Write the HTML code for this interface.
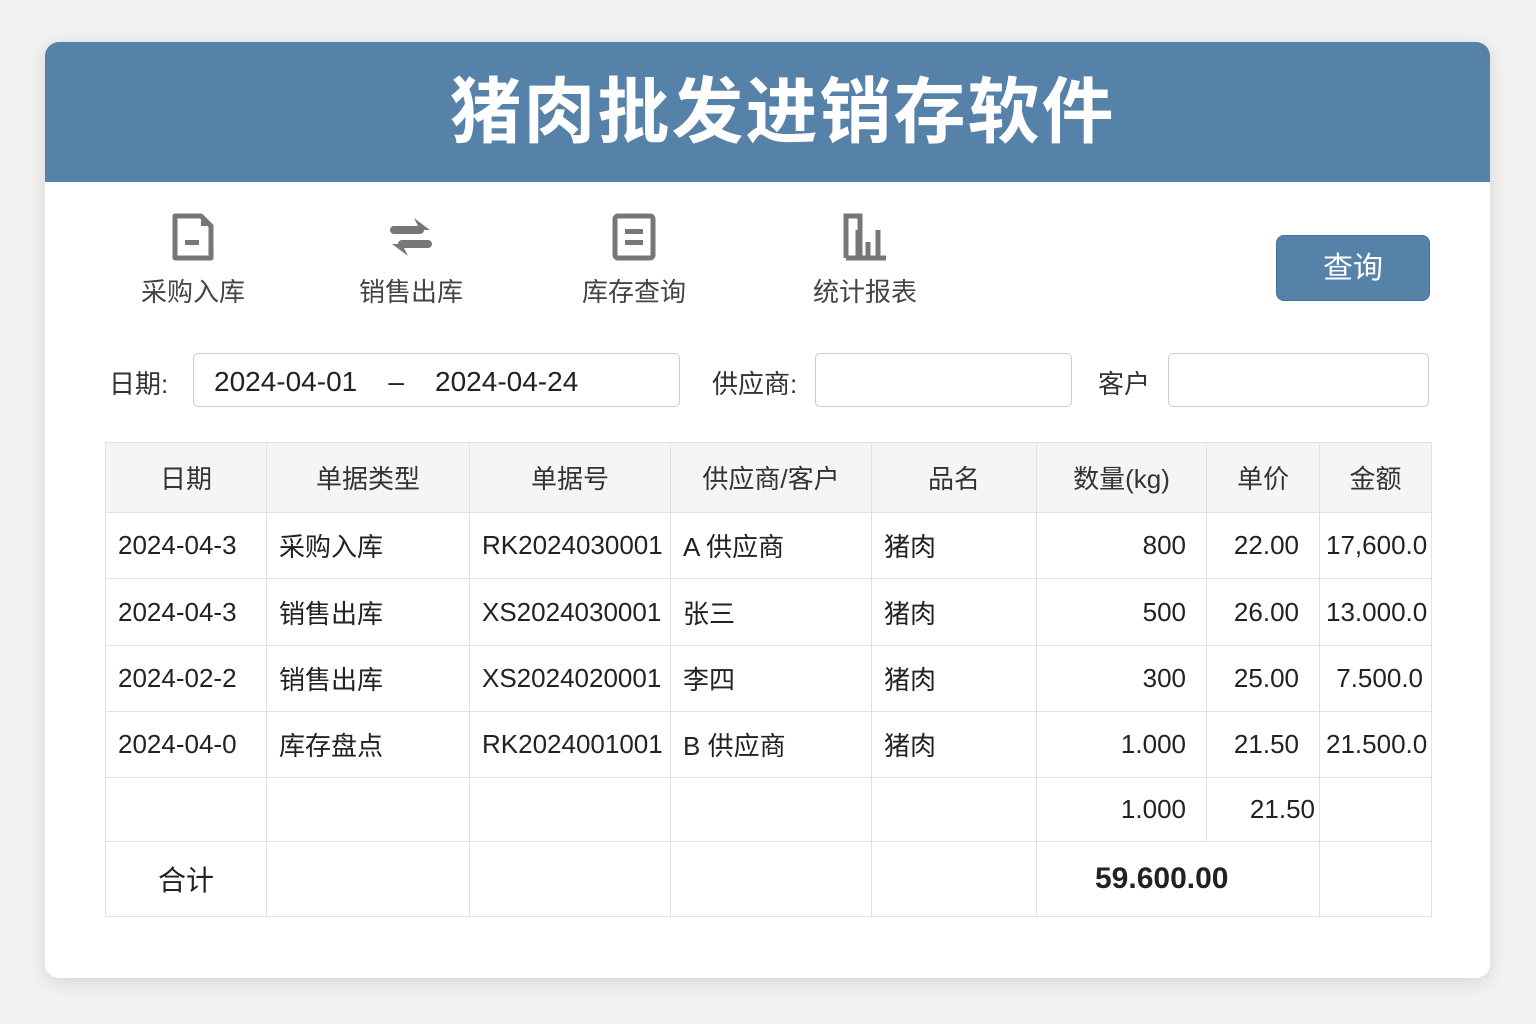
<!DOCTYPE html>
<html><head><meta charset="utf-8"><style>
body{margin:0;width:1536px;height:1024px;background:#f2f2f0;font-family:"Liberation Sans","Noto Sans CJK SC",sans-serif;position:relative;overflow:hidden}
.card{position:absolute;left:45px;top:42px;width:1445px;height:936px;background:#fff;border-radius:14px;box-shadow:0 4px 18px rgba(0,0,0,.12);overflow:hidden}
.hd{height:140px;background:#5681a8;color:#fff;font-size:72px;font-weight:bold;text-align:center;line-height:142px;letter-spacing:2px;padding-left:30px}
.ab{position:absolute;text-align:center;color:#444;font-size:26px;width:160px}
.ab svg{display:block;margin:0 auto 10px}
.btn{position:absolute;left:1231px;top:193px;width:154px;height:66px;background:#5681a8;border-radius:8px;color:#fff;font-size:30px;text-align:center;line-height:66px;border:1px solid #46709a;box-sizing:border-box}
.lbl{position:absolute;font-size:26px;color:#333}
.inp{position:absolute;border:1.5px solid #ccc;border-radius:5px;height:54px;box-sizing:border-box;font-size:28px;color:#222;line-height:56px}
table{position:absolute;left:60px;top:400px;border-collapse:collapse;font-size:26px;color:#222;table-layout:fixed;width:1326px}
td{border:1px solid #e2e2e2;padding:0 12px;white-space:nowrap;overflow:hidden}
tr.h td{background:#f5f5f3;text-align:center;color:#333}
.r{text-align:right;padding-right:20px}
</style></head><body>
<div class="card">
<div class="hd">猪肉批发进销存软件</div>
<div class="ab" style="left:68px;top:170px"><svg width="46" height="50" viewBox="0 0 46 50"><path d="M5 4h26l10 10v32H5z" fill="none" stroke="#777" stroke-width="5" stroke-linejoin="round"/><path d="M31 4v10h10" fill="#777"/><rect x="15" y="28" width="14" height="5" fill="#777"/></svg>采购入库</div>
<div class="ab" style="left:286px;top:170px"><svg width="46" height="50" viewBox="0 0 46 50"><path d="M2 18h30l-6-12 16 12z M44 32H14l6 12L4 32z" fill="#777"/><rect x="2" y="14" width="34" height="8" rx="4" fill="#777"/><rect x="10" y="28" width="34" height="8" rx="4" fill="#777"/></svg>销售出库</div>
<div class="ab" style="left:509px;top:170px"><svg width="46" height="50" viewBox="0 0 46 50"><rect x="4" y="4" width="38" height="42" rx="3" fill="none" stroke="#777" stroke-width="5"/><rect x="14" y="17" width="18" height="5" fill="#777"/><rect x="14" y="28" width="18" height="5" fill="#777"/></svg>库存查询</div>
<div class="ab" style="left:740px;top:170px"><svg width="46" height="50" viewBox="0 0 46 50"><path d="M4 46V4h14v42M16 46V18M26 46V30M36 46V18M4 46h40" fill="none" stroke="#777" stroke-width="5"/></svg>统计报表</div>
<div class="btn">查询</div>
<div class="lbl" style="left:64px;top:322px">日期:</div>
<div class="inp" style="left:148px;top:311px;width:487px;padding-left:20px">2024-04-01 &nbsp;&nbsp;&nbsp;–&nbsp;&nbsp;&nbsp; 2024-04-24</div>
<div class="lbl" style="left:667px;top:322px">供应商:</div>
<div class="inp" style="left:770px;top:311px;width:257px"></div>
<div class="lbl" style="left:1053px;top:322px">客户</div>
<div class="inp" style="left:1123px;top:311px;width:261px"></div>
<table>
<colgroup><col style="width:161px"><col style="width:203px"><col style="width:201px"><col style="width:201px"><col style="width:165px"><col style="width:170px"><col style="width:113px"><col style="width:112px"></colgroup>
<tr class="h" style="height:70px"><td>日期</td><td>单据类型</td><td>单据号</td><td>供应商/客户</td><td>品名</td><td>数量(kg)</td><td>单价</td><td>金额</td></tr>
<tr style="height:66px"><td>2024-04-3</td><td>采购入库</td><td>RK2024030001</td><td>A 供应商</td><td>猪肉</td><td class="r">800</td><td class="r">22.00</td><td style="padding:0 6px">17,600.0</td></tr>
<tr style="height:67px"><td>2024-04-3</td><td>销售出库</td><td>XS2024030001</td><td>张三</td><td>猪肉</td><td class="r">500</td><td class="r">26.00</td><td style="padding:0 6px">13.000.0</td></tr>
<tr style="height:66px"><td>2024-02-2</td><td>销售出库</td><td>XS2024020001</td><td>李四</td><td>猪肉</td><td class="r">300</td><td class="r">25.00</td><td class="r" style="padding-right:8px">7.500.0</td></tr>
<tr style="height:66px"><td>2024-04-0</td><td>库存盘点</td><td>RK2024001001</td><td>B 供应商</td><td>猪肉</td><td class="r">1.000</td><td class="r">21.50</td><td style="padding:0 6px">21.500.0</td></tr>
<tr style="height:64px"><td></td><td></td><td></td><td></td><td></td><td class="r">1.000</td><td style="text-align:right;padding-right:4px">21.50</td><td></td></tr>
<tr style="height:75px"><td style="text-align:center;font-size:28px">合计</td><td></td><td></td><td></td><td></td><td colspan="2" style="font-size:30px;padding-left:58px;font-weight:bold">59.600.00</td><td></td></tr>
</table>
</div>
</body></html>
